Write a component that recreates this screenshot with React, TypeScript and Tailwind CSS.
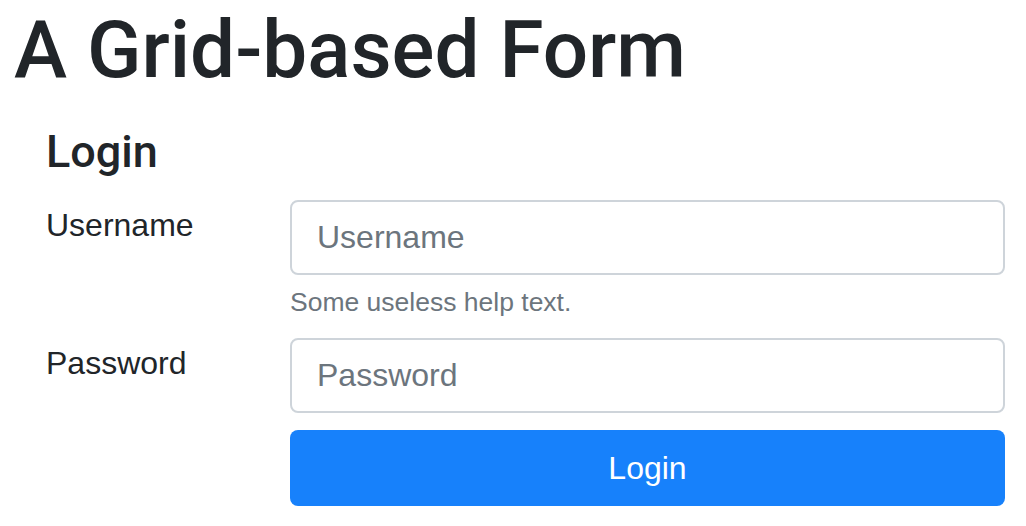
import React from 'react';

const font = { fontFamily: '"Liberation Sans", Arial, sans-serif' };
const headingFont = { fontFamily: 'Roboto, "Liberation Sans", Arial, sans-serif' };

export default function App() {
  return (
    <div className="min-h-screen bg-white text-[#212529]" style={font}>
      <div className="pl-[14px] pr-[21px]">
        <h1 className="mt-[2px] text-[80px] leading-[1.2] font-medium" style={headingFont}>
          A Grid-based Form
        </h1>

        {/* Login form */}
        <form className="pl-[32px] mt-[27px]" onSubmit={(e) => e.preventDefault()}>
          <h4 className="text-[45px] leading-[1.2] font-medium" style={headingFont}>
            Login
          </h4>

          <div className="mt-[21px] grid grid-cols-[244px_1fr]">
            <label htmlFor="username" className="pt-[1px] text-[32px] leading-[1.5]">
              Username
            </label>
            <div>
              <input
                id="username"
                type="text"
                placeholder="Username"
                className="block h-[75px] w-full rounded-[8px] border-2 border-[#ced4da] bg-white px-[25px] text-[32px] text-[#495057] placeholder:text-[#6c757d] outline-none"
              />
              <small className="mt-[8px] block text-[26.5px] leading-[1.5] text-[#6c757d]">
                Some useless help text.
              </small>
            </div>
          </div>

          <div className="mt-[15px] grid grid-cols-[244px_1fr]">
            <label htmlFor="password" className="pt-[1px] text-[32px] leading-[1.5]">
              Password
            </label>
            <input
              id="password"
              type="password"
              placeholder="Password"
              className="block h-[75px] w-full rounded-[8px] border-2 border-[#ced4da] bg-white px-[25px] text-[32px] text-[#495057] placeholder:text-[#6c757d] outline-none"
            />
          </div>

          <div className="mt-[17px] grid grid-cols-[244px_1fr]">
            <div />
            <button
              type="submit"
              className="h-[76px] w-full rounded-[8px] bg-[#1781fb] text-[32px] leading-[1.5] text-white"
            >
              Login
            </button>
          </div>
        </form>
      </div>
    </div>
  );
}
